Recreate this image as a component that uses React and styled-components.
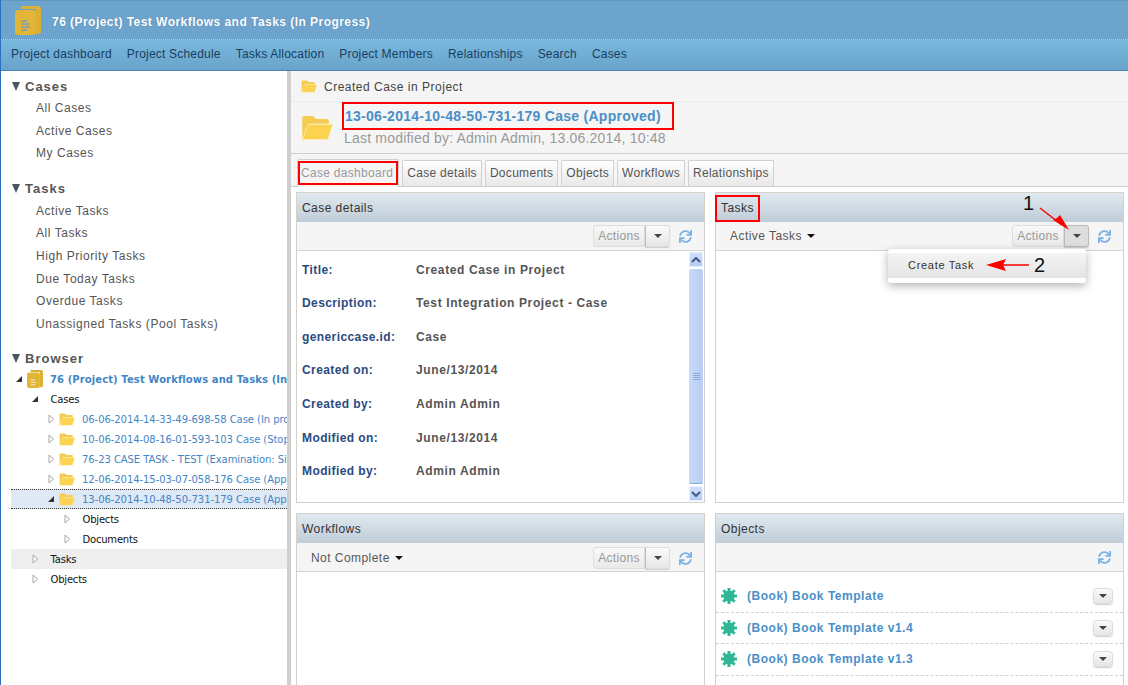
import React from 'react';
import styled, { createGlobalStyle } from 'styled-components';
import { FaSync } from 'react-icons/fa';

const caseLinks = [
  { label: '06-06-2014-14-33-49-698-58 Case (In progress)' },
  { label: '10-06-2014-08-16-01-593-103 Case (Stopped)' },
  { label: '76-23 CASE TASK - TEST (Examination: Single)' },
  { label: '12-06-2014-15-03-07-058-176 Case (Approved)' },
];

const caseFields = [
  ['Title:', 'Created Case in Project'],
  ['Description:', 'Test Integration Project - Case'],
  ['genericcase.id:', 'Case'],
  ['Created on:', 'June/13/2014'],
  ['Created by:', 'Admin Admin'],
  ['Modified on:', 'June/13/2014'],
  ['Modified by:', 'Admin Admin'],
];

const navItems = ['Project dashboard', 'Project Schedule', 'Tasks Allocation', 'Project Members', 'Relationships', 'Search', 'Cases'];
const tabs = ['Case details', 'Documents', 'Objects', 'Workflows', 'Relationships'];
const objects = ['(Book) Book Template', '(Book) Book Template v1.4', '(Book) Book Template v1.3'];

const Folder = ({ size = 18 }) => (
  <svg width={size} height={size * 0.8} viewBox="0 0 32 26">
    <path d="M1 24V3q0-2 2-2h9l3 3h11q2 0 2 2v3H9L5 24z" fill="#f4cc52" />
    <path d="M7 9.5h25l-5 15.5H1z" fill="#fbd34e" stroke="#fdf0c0" strokeWidth="0.8" />
  </svg>
);

const BookIcon = ({ large }) => (
  <svg width={large ? 26 : 16} height={large ? 29 : 18} viewBox="0 0 26 29">
    <path d="M6 0h17q3 0 3 3v22q0 3-3 3h-2V3H6z" fill="#dcb033" />
    <rect x="0" y="4" width="21" height="25" rx="3" fill="#e2b536" />
    {large
      ? <path d="M6 15h6M6 18h9M6 21h9M6 24h6" stroke="#7a9fc0" strokeWidth="1.4" />
      : <path d="M6 16h7M6 20h9M6 24h7" stroke="#f3e2a8" strokeWidth="2" />}
  </svg>
);

const Gear = () => (
  <svg width="16" height="16" viewBox="0 0 16 16">
    <circle cx="8" cy="8" r="5.5" fill="#2fb795" />
    <path d="M8 0v16M0 8h16M2.3 2.3l11.4 11.4M13.7 2.3L2.3 13.7" stroke="#2fb795" strokeWidth="3" />
  </svg>
);

const Arrow = ({ open }) => (
  <TreeToggle>
    <svg width="7" height="10" viewBox="0 0 7 10">
      {open
        ? <path d="M0 8L6 2v6z" fill="#333" />
        : <path d="M1 1l4.5 4L1 9z" fill="#fff" stroke="#a8a8a8" />}
    </svg>
  </TreeToggle>
);

const Toolbar = ({ filter, low }) => (
  <ToolRow $low={low}>
    {filter && <Filter>{filter} <Caret /></Filter>}
    <Spacer />
    <ButtonGroup>
      <ActionsButton>Actions</ActionsButton>
      <CaretButton $pressed={filter === 'Active Tasks'}><Caret $grey /></CaretButton>
    </ButtonGroup>
    <Refresh><FaSync size={13} /></Refresh>
  </ToolRow>
);

export default function App() {
  return (
    <Page>
      <GlobalStyle />
      <Header>
        <BookIcon large />
        <HeaderTitle>76 (Project) Test Workflows and Tasks (In Progress)</HeaderTitle>
      </Header>
      <Nav>
        {navItems.map((item) => <NavLink key={item}>{item}</NavLink>)}
      </Nav>
      <Columns>
        <Sidebar>
          <SideHead><HeadCaret />Cases</SideHead>
          <SideLink>All Cases</SideLink>
          <SideLink>Active Cases</SideLink>
          <SideLink>My Cases</SideLink>
          <SideHead $gap={16}><HeadCaret />Tasks</SideHead>
          <SideLink>Active Tasks</SideLink>
          <SideLink>All Tasks</SideLink>
          <SideLink>High Priority Tasks</SideLink>
          <SideLink>Due Today Tasks</SideLink>
          <SideLink>Overdue Tasks</SideLink>
          <SideLink>Unassigned Tasks (Pool Tasks)</SideLink>
          <SideHead $gap={15}>
            <HeadCaret />Browser
          </SideHead>
          <Tree>
            <TreeRow $indent={5}>
              <Arrow open /><IconSlot><BookIcon /></IconSlot>
              <ProjectLink>76 (Project) Test Workflows and Tasks (In Progress)</ProjectLink>
            </TreeRow>
            <TreeRow $indent={21}><Arrow open /><TreeText>Cases</TreeText></TreeRow>
            {caseLinks.map((c) => (
              <TreeRow $indent={37} key={c.label}>
                <Arrow /><IconSlot><Folder size={16} /></IconSlot><CaseLink>{c.label}</CaseLink>
              </TreeRow>
            ))}
            <TreeRow $indent={37} $selected>
              <Arrow open /><IconSlot><Folder size={16} /></IconSlot>
              <CaseLink>13-06-2014-10-48-50-731-179 Case (Approved)</CaseLink>
            </TreeRow>
            <TreeRow $indent={53}><Arrow /><TreeText>Objects</TreeText></TreeRow>
            <TreeRow $indent={53}><Arrow /><TreeText>Documents</TreeText></TreeRow>
            <TreeRow $indent={21} $hover><Arrow /><TreeText>Tasks</TreeText></TreeRow>
            <TreeRow $indent={21}><Arrow /><TreeText>Objects</TreeText></TreeRow>
          </Tree>
        </Sidebar>
        <Splitter />
        <Main>
          <Crumb>
            <Folder size={16} />
            <span>Created Case in Project</span>
          </Crumb>
          <TitleBlock>
            <Folder size={32} />
            <TitleText>
              <CaseTitle>13-06-2014-10-48-50-731-179 Case (Approved)</CaseTitle>
              <Modified>Last modified by: Admin Admin, 13.06.2014, 10:48</Modified>
            </TitleText>
          </TitleBlock>
          <TabBar>
            <Tab $active><Marked $tab>Case dashboard</Marked></Tab>
            {tabs.map((t) => <Tab key={t}>{t}</Tab>)}
          </TabBar>
          <Dashboard>
            <Panel $height={310}>
              <PanelHead>Case details</PanelHead>
              <Toolbar />
              <DetailBody>
                <FieldGrid>
                  {caseFields.map(([k, v]) => (
                    <React.Fragment key={k}>
                      <FieldName>{k}</FieldName>
                      <FieldValue>{v}</FieldValue>
                    </React.Fragment>
                  ))}
                </FieldGrid>
                <Scrollbar>
                  <ScrollBtn>
                    <svg width="10" height="6" viewBox="0 0 10 6"><path d="M1 5l4-4 4 4" fill="none" stroke="#3f5a86" strokeWidth="2" /></svg>
                  </ScrollBtn>
                  <ScrollThumb><Grip /></ScrollThumb>
                  <ScrollBtn>
                    <svg width="10" height="6" viewBox="0 0 10 6"><path d="M1 1l4 4 4-4" fill="none" stroke="#3f5a86" strokeWidth="2" /></svg>
                  </ScrollBtn>
                </Scrollbar>
              </DetailBody>
            </Panel>
            <Panel $height={310}>
              <PanelHead><Marked>Tasks</Marked></PanelHead>
              <Toolbar filter="Active Tasks" />
              <Menu><MenuItem>Create Task</MenuItem></Menu>
              <CalloutArrowOne width="50" height="40" viewBox="0 0 50 40">
                <path d="M14 15L36 32" stroke="#f00" strokeWidth="1.5" />
                <path d="M43 37L27 27l4-2 3-3z" fill="#f00" />
              </CalloutArrowOne>
              <CalloutOne>1</CalloutOne>
              <CalloutTwo>2</CalloutTwo>
              <CalloutArrowTwo width="44" height="14" viewBox="0 0 44 14">
                <path d="M12 7H43" stroke="#f00" strokeWidth="1.5" />
                <path d="M0 7L20 1l-3 6 3 6z" fill="#f00" />
              </CalloutArrowTwo>
            </Panel>
            <Panel>
              <PanelHead>Workflows</PanelHead>
              <Toolbar filter="Not Complete" low />
            </Panel>
            <Panel>
              <PanelHead>Objects</PanelHead>
              <ToolRow>
                <Spacer />
                <Refresh><FaSync size={13} /></Refresh>
              </ToolRow>
              <ObjectList>
                {objects.map((o) => (
                  <ObjectRow key={o}>
                    <Gear />
                    <ObjectLink>{o}</ObjectLink>
                    <RoundCaret><Caret $grey /></RoundCaret>
                  </ObjectRow>
                ))}
              </ObjectList>
            </Panel>
          </Dashboard>
        </Main>
      </Columns>
    </Page>
  );
}

const GlobalStyle = createGlobalStyle`
  html, body { margin: 0; padding: 0; background: #fff; }
  body { font-family: "Liberation Sans", Arial, sans-serif; font-size: 12px; overflow: hidden; }
  * { box-sizing: border-box; }
`;

const Page = styled.div`
  width: 1128px;
  height: 685px;
  overflow: hidden;
  display: flex;
  flex-direction: column;
  border-left: 1px solid #2c6fc0;
`;

const Header = styled.div`
  height: 40px;
  flex: none;
  display: flex;
  align-items: center;
  padding: 0 0 0 14px;
  gap: 11px;
  background: #6da4cd;
  border-bottom: 1px dotted #a8d0ea;
  border-top: 1px solid #5f97c0;
`;

const HeaderTitle = styled.div`
  margin-top: 3px;
  color: #fff;
  font-size: 12px;
  font-weight: bold;
  letter-spacing: 0.46px;
  text-shadow: 0 0 1px #47799f;
`;

const Nav = styled.div`
  height: 31px;
  flex: none;
  display: flex;
  align-items: center;
  gap: 15px;
  padding: 0 0 2px 10px;
  background: linear-gradient(#78b8de, #6aa3ca);
  border-bottom: 1px solid #4a83b0;
`;

const NavLink = styled.span`
  color: #173f62;
  font-size: 12px;
  letter-spacing: 0.2px;
`;

const Columns = styled.div`
  flex: 1;
  display: flex;
  min-height: 0;
`;

const Sidebar = styled.div`
  width: 286px;
  flex: none;
  overflow: hidden;
  padding: 7px 0 0 10px;
`;

const Splitter = styled.div`
  width: 4px;
  flex: none;
  background: #cfcfcf;
`;

const SideHead = styled.div`
  display: flex;
  align-items: center;
  gap: 5px;
  height: 16px;
  margin-top: ${(p) => p.$gap || 0}px;
  margin-bottom: 3px;
  color: #555;
  font-size: 13px;
  font-weight: bold;
  letter-spacing: 1px;
`;

const HeadCaret = styled.i`
  width: 0;
  height: 0;
  margin-left: 1px;
  border-left: 4.5px solid transparent;
  border-right: 4.5px solid transparent;
  border-top: 9px solid #4a5560;
`;

const SideLink = styled.div`
  height: 22.6px;
  line-height: 22.6px;
  padding-left: 25px;
  color: #555;
  font-size: 12px;
  letter-spacing: 0.55px;
  white-space: nowrap;
`;

const Tree = styled.div`
  margin-top: 0;
`;

const TreeRow = styled.div`
  height: 20px;
  display: flex;
  align-items: center;
  padding-left: ${(p) => p.$indent}px;
  white-space: nowrap;
  overflow: hidden;
  background: ${(p) => (p.$selected ? '#dfe8f5' : p.$hover ? '#eeeeee' : 'transparent')};
  ${(p) => p.$selected && 'border-top: 1px dotted #333; border-bottom: 1px dotted #333;'}
`;

const TreeToggle = styled.span`
  width: 11px;
  flex: none;
  display: flex;
  align-items: center;
`;

const IconSlot = styled.span`
  width: 23px;
  flex: none;
  display: flex;
  align-items: center;
`;

const TreeText = styled.span`
  margin-left: 7.5px;
  color: #111;
  font-family: "DejaVu Sans", sans-serif;
  font-size: 10px;
  letter-spacing: -0.2px;
`;

const CaseLink = styled.span`
  color: #3f86c6;
  font-family: "DejaVu Sans", sans-serif;
  font-size: 10px;
  letter-spacing: -0.06px;
`;

const ProjectLink = styled.span`
  color: #3f86c6;
  font-family: "DejaVu Sans", sans-serif;
  font-size: 10px;
  font-weight: bold;
  letter-spacing: 0.1px;
`;

const Main = styled.div`
  flex: 1;
  min-width: 0;
  display: flex;
  flex-direction: column;
  background: #fff;
`;

const Crumb = styled.div`
  height: 31px;
  flex: none;
  display: flex;
  align-items: center;
  gap: 7px;
  padding-left: 10px;
  color: #444;
  font-size: 12px;
  letter-spacing: 0.5px;
  background: #f5f5f5;
  box-shadow: inset 0 -1px 0 #ececec;
`;

const TitleBlock = styled.div`
  height: 52px;
  flex: none;
  display: flex;
  align-items: center;
  gap: 11px;
  padding-left: 10px;
  background: #f5f5f5;
  border-bottom: 1px solid #cfcfcf;
`;

const TitleText = styled.div`
  margin-top: -3px;
`;

const CaseTitle = styled.div`
  display: inline-block;
  color: #4a8fc8;
  font-size: 14px;
  font-weight: bold;
  letter-spacing: 0.27px;
  outline: 2px solid #f00;
  padding: 0 11px 0 1px;
  line-height: 24px;
`;

const Modified = styled.div`
  color: #999;
  font-size: 14px;
  letter-spacing: 0.2px;
  line-height: 20px;
`;

const TabBar = styled.div`
  height: 33px;
  flex: none;
  display: flex;
  align-items: flex-end;
  gap: 3px;
  padding-left: 6px;
  background: #f5f5f5;
  border-bottom: 1px solid #cfcfcf;
`;

const Tab = styled.div`
  height: ${(p) => (p.$active ? '28px' : '26px')};
  margin-bottom: ${(p) => (p.$active ? '-1px' : '0')};
  padding: 0 ${(p) => (p.$active ? '2px' : '4px')};
  line-height: 25px;
  color: ${(p) => (p.$active ? '#999' : '#555')};
  font-size: 12px;
  letter-spacing: 0.3px;
  white-space: nowrap;
  border: 1px solid #d0d0d0;
  border-bottom: none;
  border-radius: 2px 2px 0 0;
  background: ${(p) => (p.$active ? '#f5f5f5' : 'linear-gradient(#fff, #e8e8e8)')};
`;

const Marked = styled.span`
  display: inline-block;
  outline: 2px solid #f00;
  color: inherit;
  ${(p) => (p.$tab
    ? 'height: 20px; line-height: 20px; padding: 0 3px 0 1px; margin-top: 3px; letter-spacing: 0.3px;'
    : 'height: 23px; line-height: 23px; padding: 0 4px; margin-left: -4px;')}
`;

const Dashboard = styled.div`
  flex: 1;
  min-height: 0;
  display: grid;
  grid-template-columns: 409px 409px;
  grid-template-rows: 311px 1fr;
  column-gap: 10px;
  row-gap: 10px;
  padding: 5px 0 0 5px;
  overflow: hidden;
`;

const Panel = styled.div`
  position: relative;
  border: 1px solid #d5d0c8;
  display: flex;
  flex-direction: column;
  min-height: 0;
  background: #fff;
  ${(p) => p.$height === undefined && 'border-bottom: none; min-height: 200px;'}
`;

const PanelHead = styled.div`
  height: 29px;
  flex: none;
  line-height: 30px;
  padding-left: 5px;
  color: #333;
  font-size: 12px;
  letter-spacing: 0.45px;
  background: linear-gradient(#e0e9ef, #bfccd8);
`;

const ToolRow = styled.div`
  height: 29px;
  flex: none;
  display: flex;
  align-items: center;
  padding: ${(p) => (p.$low ? '2px' : '0')} 11px 0 14px;
  background: #f5f5f5;
  border-bottom: 1px solid #d5d5d0;
`;

const Spacer = styled.div`
  flex: 1;
`;

const Filter = styled.span`
  display: flex;
  align-items: center;
  gap: 5px;
  color: #555;
  font-size: 12px;
  letter-spacing: 0.45px;
`;

const Caret = styled.i`
  display: inline-block;
  width: 0;
  height: 0;
  border-left: 4px solid transparent;
  border-right: 4px solid transparent;
  border-top: 4px solid ${(p) => (p.$grey ? '#444' : '#111')};
`;

const ButtonGroup = styled.div`
  display: flex;
  height: 22px;
`;

const ActionsButton = styled.div`
  width: 52px;
  line-height: 20px;
  text-align: center;
  color: #999;
  font-size: 12px;
  letter-spacing: 0.3px;
  background: linear-gradient(#f8f8f8, #e9e9e9);
  border: 1px solid #ddd;
  border-radius: 3px 0 0 3px;
`;

const CaretButton = styled.div`
  width: 25px;
  display: flex;
  align-items: center;
  justify-content: center;
  border: 1px solid ${(p) => (p.$pressed ? '#bbb' : '#ddd')};
  border-left: 1px solid #bbb;
  border-radius: 0 3px 3px 0;
  background: ${(p) => (p.$pressed ? '#dedede' : 'linear-gradient(#fafafa, #e6e6e6)')};
  box-shadow: 0 1px 1px #ccc;
`;

const Refresh = styled.span`
  width: 13px;
  display: flex;
  margin-left: 9px;
  margin-right: 1px;
  color: #7db2e6;
`;

const DetailBody = styled.div`
  flex: 1;
  min-height: 0;
  display: flex;
`;

const FieldGrid = styled.div`
  flex: 1;
  display: grid;
  grid-template-columns: 114px 1fr;
  grid-auto-rows: 33.55px;
  align-items: center;
  padding: 2px 0 0 5px;
`;

const FieldName = styled.div`
  color: #2b4a7f;
  font-size: 12px;
  font-weight: bold;
  letter-spacing: 0.4px;
`;

const FieldValue = styled.div`
  color: #555;
  font-size: 12px;
  font-weight: bold;
  letter-spacing: 0.62px;
`;

const Scrollbar = styled.div`
  width: 17px;
  flex: none;
  display: flex;
  flex-direction: column;
  padding: 1px 1px 1px 2px;
  gap: 2px;
`;

const ScrollBtn = styled.div`
  height: 15px;
  flex: none;
  display: flex;
  align-items: center;
  justify-content: center;
  background: linear-gradient(#d2e0fb, #b6ccf5);
  border: 1px solid #e8eefb;
`;

const ScrollThumb = styled.div`
  flex: 1;
  display: flex;
  align-items: center;
  justify-content: center;
  background: linear-gradient(90deg, #c8d9f8, #b8cdf5);
  border-bottom: 1px solid #8ba6d4;
  border-radius: 2px;
`;

const Grip = styled.div`
  width: 7px;
  height: 7px;
  background: repeating-linear-gradient(#8fabd8 0 1px, transparent 1px 2px);
`;

const Menu = styled.div`
  position: absolute;
  top: 56px;
  left: 172px;
  width: 198px;
  height: 34px;
  padding: 4px 0 5px;
  background: #fff;
  border-radius: 3px;
  box-shadow: 0 3px 10px rgba(0, 0, 0, 0.3);
`;

const MenuItem = styled.div`
  height: 25px;
  line-height: 25px;
  padding-left: 20px;
  color: #333;
  font-size: 11px;
  letter-spacing: 0.7px;
  background: linear-gradient(#f4f4f4, #e4e4e4);
`;

const CalloutArrowOne = styled.svg`
  position: absolute;
  top: 0;
  left: 310px;
  pointer-events: none;
`;

const CalloutOne = styled.div`
  position: absolute;
  top: -1px;
  left: 307px;
  color: #111;
  font-size: 20px;
  line-height: 23px;
`;

const CalloutTwo = styled.div`
  position: absolute;
  top: 61px;
  left: 318px;
  color: #111;
  font-size: 20px;
  line-height: 23px;
`;

const CalloutArrowTwo = styled.svg`
  position: absolute;
  top: 65px;
  left: 270px;
`;

const ObjectList = styled.div`
  padding-top: 9px;
`;

const ObjectRow = styled.div`
  height: 31.5px;
  display: flex;
  align-items: center;
  padding: 0 10px 0 5px;
  border-bottom: 1px dashed #d0d0d0;
`;

const ObjectLink = styled.span`
  flex: 1;
  margin-left: 10px;
  color: #4a8fc8;
  font-size: 12px;
  font-weight: bold;
  letter-spacing: 0.52px;
`;

const RoundCaret = styled.div`
  width: 20px;
  height: 16px;
  display: flex;
  align-items: center;
  justify-content: center;
  border: 1px solid #ddd;
  border-radius: 4px;
  background: linear-gradient(#fafafa, #e6e6e6);
  box-shadow: 0 1px 1px #ccc;
`;
